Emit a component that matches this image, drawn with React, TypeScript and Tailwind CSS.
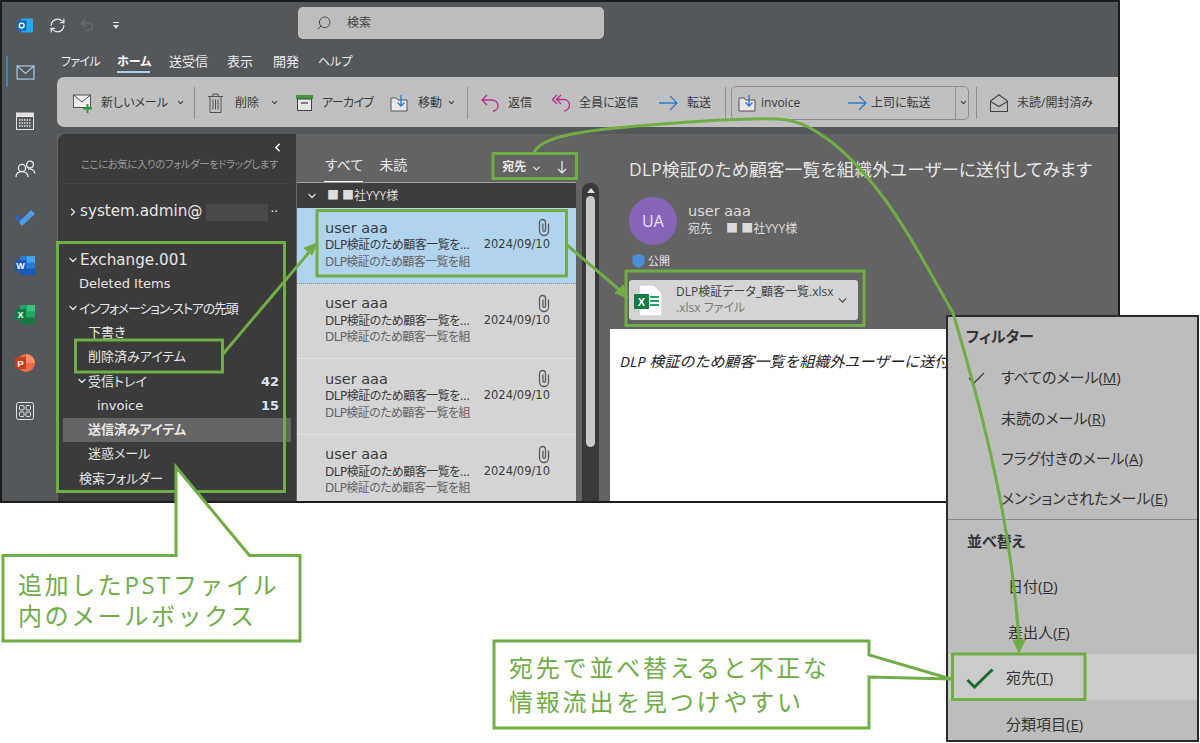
import { ChevronDown, ChevronLeft, ChevronRight, RefreshCw, Search, Undo2 } from "lucide-react";

const folders = [
  { label: "Deleted Items", cls: "pl-[16px]" },
  { label: "インフォメーション-ストアの先頭", cls: "pl-[16px] tracking-[-1.2px]", open: true },
  { label: "下書き", cls: "pl-[25px]" },
  { label: "削除済みアイテム", cls: "pl-[25px]" },
  { label: "受信トレイ", cls: "pl-[25px]", open: true, count: "42" },
  { label: "invoice", cls: "pl-[34px]", count: "15" },
  { label: "送信済みアイテム", cls: "pl-[25px] font-bold bg-[#646464]" },
  { label: "迷惑メール", cls: "pl-[25px]" },
  { label: "検索フォルダー", cls: "pl-[16px]" },
];

function Envelope({ className = "" }: { className?: string }) {
  return (
    <svg viewBox="0 0 20 16" className={className} fill="none" stroke="currentColor" strokeWidth="1.2">
      <rect x="1" y="1" width="18" height="14" />
      <path d="M1 1l9 8 9-8" />
    </svg>
  );
}

function Sep() {
  return <span className="block h-[32px] w-px bg-[#8f8f8f]" />;
}

function MoveIcon({ className = "" }: { className?: string }) {
  return (
    <svg viewBox="0 0 18 18" className={className} fill="none">
      <path d="M1 4h5l2 2h9v11H1z" fill="#e8e8e8" stroke="#555" />
      <path d="M11 1v11M7.5 8.5L11 12l3.5-3.5" stroke="#2b7cd3" strokeWidth="1.4" />
    </svg>
  );
}

function Arrow({ className = "" }: { className?: string }) {
  return (
    <svg viewBox="0 0 19 16" className={className} fill="none" stroke="#2b7cc0" strokeWidth="1.3">
      <path d="M0 8h18M11 1l7 7-7 7" />
    </svg>
  );
}

function Clip() {
  return (
    <svg viewBox="0 0 12 19" className="w-[12px] h-[19px] -mt-[2px]" fill="none" stroke="#5c5c5c" strokeWidth="1.3">
      <path d="M10.500 5.500V13a4.500 4.500 0 0 1-9 0V4.500a3 3 0 0 1 6 0V12a1.300 1.300 0 0 1-2.600 0V5.500" />
    </svg>
  );
}

function OfficeIcon({ letter, left, mid, light }: { letter: string; left: string; mid: string; light: string }) {
  return (
    <svg viewBox="0 0 20 19" className="w-[20px] h-[19px]">
      <rect x="5" y="0" width="15" height="19" rx="1" fill={mid} />
      <rect x="12" y="0" width="8" height="6.500" fill={light} />
      <rect x="5" y="12.500" width="15" height="6.500" fill={left} />
      <rect x="0" y="4" width="11" height="11" rx="1" fill={left} />
      <text x="5.500" y="12.700" fontSize="9" fontWeight="700" textAnchor="middle" fill="#fff" fontFamily="Liberation Sans">{letter}</text>
    </svg>
  );
}

function Rail() {
  return (
    <div className="w-[55px] shrink-0 relative">
      <span className="absolute left-[4px] top-[8px] h-[31px] w-[2px] bg-[#3a86d0]" />
      <div className="w-[46px] flex flex-col items-center">
        <div className="h-[48px] flex items-center justify-center">
          <Envelope className="w-[19px] h-[15px] text-[#a9d0ef]" />
        </div>
        <div className="h-[49px] flex items-center justify-center">
          <svg viewBox="0 0 18 18" className="w-[18px] h-[18px]" fill="none">
            <rect x="0.5" y="1" width="17" height="16.5" stroke="#e0e0e0" />
            <rect x="0.5" y="1" width="17" height="4" fill="#e0e0e0" />
            <path d="M3 8h12M3 11h12M3 14h12" stroke="#e0e0e0" strokeDasharray="1.5 1" strokeWidth="1.5" />
          </svg>
        </div>
        <div className="h-[48px] flex items-center justify-center">
          <svg viewBox="0 0 21 18" className="w-[21px] h-[18px]" fill="none" stroke="#e8e8e8" strokeWidth="1.3">
            <circle cx="7" cy="8" r="3.6" />
            <path d="M1 17c0-3.5 2.5-5.4 6-5.4s6 1.9 6 5.4" />
            <circle cx="15" cy="4.5" r="3.4" />
            <path d="M13 9c3.500-.6 6.500 1.200 6.800 4.500" />
          </svg>
        </div>
        <div className="h-[48px] flex items-center justify-center">
          <svg viewBox="0 0 20 17" className="w-[20px] h-[17px]">
            <path d="M0 9l3-3 4 4-3 3z" fill="#2564cf" />
            <path d="M4 13L16 1l4 4L7 17z" fill="#4f9be8" />
          </svg>
        </div>
        <div className="h-[49px] flex items-center justify-center">
          <OfficeIcon letter="W" left="#185abd" mid="#2b7cd3" light="#41a5ee" />
        </div>
        <div className="h-[48px] flex items-center justify-center">
          <OfficeIcon letter="X" left="#107c41" mid="#21a366" light="#33c481" />
        </div>
        <div className="h-[49px] flex items-center justify-center">
          <svg viewBox="0 0 20 18" className="w-[20px] h-[18px]">
            <circle cx="11" cy="9" r="9" fill="#ed6c47" />
            <path d="M11 0a9 9 0 0 1 9 9h-9z" fill="#ff8f6b" />
            <rect x="0" y="3" width="11" height="12" rx="1" fill="#c43e1c" />
            <text x="5.500" y="12.500" fontSize="9.500" fontWeight="700" textAnchor="middle" fill="#fff" fontFamily="Liberation Sans">P</text>
          </svg>
        </div>
        <div className="h-[47px] flex items-center justify-center">
          <svg viewBox="0 0 18 18" className="w-[18px] h-[18px]" fill="none" stroke="#e0e0e0">
            <rect x="0.5" y="0.5" width="17" height="17" rx="2" />
            <rect x="3.500" y="3.500" width="4.500" height="4.500" rx="1" />
            <rect x="10" y="3.500" width="4.500" height="4.500" rx="1" />
            <rect x="3.500" y="10" width="4.500" height="4.500" rx="1" />
            <rect x="10" y="10" width="4.500" height="4.500" rx="1" />
          </svg>
        </div>
      </div>
    </div>
  );
}

function Ribbon() {
  return (
    <div className="mt-px h-[50px] rounded-l-[7px] bg-[#c0c0c0] flex items-center pt-[1px] pl-[16px] text-[12px] text-[#3a3a3a] whitespace-nowrap shrink-0">
      <svg viewBox="0 0 20 20" className="w-[20px] h-[20px]" fill="none">
        <rect x="0.500" y="2" width="17" height="12.500" stroke="#555" fill="#eee" />
        <path d="M0.500 2l8.500 7 8.500-7" stroke="#555" />
        <path d="M14.500 11v9M10 15.500h9" stroke="#2e9a3c" strokeWidth="2" />
      </svg>
      <span className="ml-[8px] w-[65px]">新しいメール</span>
      <ChevronDown className="ml-[10px] w-[9px] h-[9px]" strokeWidth={3} />
      <span className="ml-[9px]"><Sep /></span>
      <svg viewBox="0 0 15 20" className="ml-[13px] w-[15px] h-[20px]" fill="none" stroke="#555">
        <path d="M0 3.500h15M5 3.500V1h5v2.500M2 3.500V19.500h11V3.500M5 6.500v10M7.500 6.500v10M10 6.500v10" />
      </svg>
      <span className="ml-[12px] w-[26px]">削除</span>
      <ChevronDown className="ml-[9px] w-[9px] h-[9px]" strokeWidth={3} />
      <svg viewBox="0 0 17 16" className="ml-[17px] w-[17px] h-[16px]" fill="none">
        <rect x="0" y="0" width="17" height="4" fill="#3f9b3f" />
        <rect x="1.500" y="4" width="14" height="11.500" stroke="#444" fill="#e6e6e6" />
        <path d="M5 8h7" stroke="#444" strokeWidth="1.300" />
      </svg>
      <span className="ml-[9px] w-[49px] tracking-[-0.6px]">アーカイブ</span>
      <MoveIcon className="ml-[19px] w-[18px] h-[18px]" />
      <span className="ml-[10px] w-[27px]">移動</span>
      <ChevronDown className="ml-[2px] w-[9px] h-[9px]" strokeWidth={3} />
      <span className="ml-[11px]"><Sep /></span>
      <svg viewBox="0 0 18 18" className="ml-[13px] w-[18px] h-[18px]" fill="none" stroke="#b5308a" strokeWidth="1.300">
        <path d="M6 1L1 6l5 5M1 6h10c3.500 0 6 2.500 6 5.500S15 17 12 17" />
      </svg>
      <span className="ml-[9px] w-[25px]">返信</span>
      <svg viewBox="0 0 18 18" className="ml-[19px] w-[18px] h-[18px]" fill="none" stroke="#b5308a" strokeWidth="1.300">
        <path d="M5 1L0.500 5.500 5 10M9 1L4.500 5.500 9 10M4.500 5.500h7.500c3 0 5.500 2.500 5.500 5.500S15 17 12 17" />
      </svg>
      <span className="ml-[9px] w-[62px]">全員に返信</span>
      <Arrow className="ml-[18px] w-[19px] h-[16px]" />
      <span className="ml-[9px] w-[26px]">転送</span>
      <span className="ml-[12px]"><Sep /></span>
      <div className="ml-[5px] w-[238px] h-[34px] rounded-[5px] border border-[#8f8f8f] flex items-center pl-[6px]">
        <MoveIcon className="w-[18px] h-[18px]" />
        <span className="ml-[5px] w-[87px]">invoice</span>
        <Arrow className="w-[19px] h-[16px]" />
        <span className="ml-[4px] w-[58px]">上司に転送</span>
        <span className="ml-[26px] h-full w-px bg-[#8f8f8f]" />
        <ChevronDown className="ml-[3px] w-[9px] h-[9px]" strokeWidth={3} />
      </div>
      <span className="ml-[7px]"><Sep /></span>
      <svg viewBox="0 0 18 18" className="ml-[13px] w-[18px] h-[18px]" fill="none" stroke="#444" strokeWidth="1.100">
        <path d="M0.500 7L9 0.800 17.500 7v10.500H0.500zM0.500 7.500L9 12.500l8.500-5" />
      </svg>
      <span className="ml-[9px]">未読/開封済み</span>
    </div>
  );
}

function FolderPane() {
  return (
    <div className="w-[238px] ml-px shrink-0 bg-[#3b3b3b] rounded-tl-[7px] text-[#e6e6e6] flex flex-col font-['DejaVu_Sans','Noto_Sans_CJK_JP',sans-serif]">
      <div className="h-[50px] mx-[5px] border-b border-[#444] relative">
        <ChevronLeft className="absolute right-[7px] top-[7px] w-[13px] h-[13px] text-white" strokeWidth={3} />
        <p className="absolute left-[18px] top-[23px] text-[10.500px] tracking-[-0.5px] text-[#9a9a9a] whitespace-nowrap">ここにお気に入りのフォルダーをドラッグします</p>
      </div>
      <div className="h-[56px] flex items-center pl-[9px] text-[15.200px]">
        <ChevronRight className="w-[12px] h-[14px]" strokeWidth={2.500} />
        <span className="ml-px leading-none">system.admin@</span>
        <span className="ml-[3px] w-[62px] h-[17px] bg-[#484848]" />
        <span className="ml-[3px] text-[12px] leading-none">··</span>
      </div>
      <div className="h-[24px] flex items-center pl-[9px] text-[15.200px] mt-[8px]">
        <ChevronDown className="w-[12px] h-[12px]" strokeWidth={2.500} />
        <span className="ml-px">Exchange.001</span>
      </div>
      <div className="flex flex-col text-[13px] mx-[5px]">
        {folders.map((f) => (
          <div key={f.label} className={`h-[24.300px] flex items-center pr-[12px] whitespace-nowrap ${f.cls}`}>
            {f.open && <ChevronDown className="-ml-[12px] w-[12px] h-[12px]" strokeWidth={2.500} />}
            <span>{f.label}</span>
            {f.count && <span className="ml-auto font-bold text-[#d5e5f3]">{f.count}</span>}
          </div>
        ))}
      </div>
    </div>
  );
}

function MessageItem({ selected = false }: { selected?: boolean }) {
  return (
    <div className={`h-[75.500px] shrink-0 pl-[28px] pr-[26px] pt-[12px] border-b font-['DejaVu_Sans','Noto_Sans_CJK_JP',sans-serif] ${selected ? "bg-[#b0d3ee] border-dotted border-[#8a8a8a]" : "bg-[#d4d4d4] border-[#e2e2e2]"}`}>
      <div className="flex items-center justify-between h-[17px] text-[14.500px] text-[#3c3c3c]">
        <span>user aaa</span>
        <Clip />
      </div>
      <div className="flex justify-between h-[16px] items-center text-[12px] text-[#3c3c3c]">
        <span className="whitespace-nowrap tracking-[-0.5px]">DLP検証のため顧客一覧を...</span>
        <span className="text-[11.500px]">2024/09/10</span>
      </div>
      <div className="h-[17px] flex items-center text-[12px] tracking-[-0.6px] text-[#666]">DLP検証のため顧客一覧を組</div>
    </div>
  );
}

function MessageList() {
  return (
    <>
      <div className="w-[279px] ml-px shrink-0 flex flex-col overflow-hidden">
        <div className="h-[49px] shrink-0 flex items-end text-[#e8e8e8] border-b border-[#a0a0a0] relative whitespace-nowrap">
          <span className="ml-[28px] mb-[7px] text-[14px]">すべて</span>
          <span className="ml-[16px] mb-[7px] text-[14px]">未読</span>
          <span className="absolute left-[27px] bottom-0 h-px w-[39px] bg-white" />
          <span className="ml-[95px] mb-[6px] text-[12px] font-bold">宛先</span>
          <ChevronDown className="ml-[5px] mb-[8px] w-[11px] h-[11px]" strokeWidth={2.500} />
          <svg viewBox="0 0 10 13" className="ml-[15px] mb-[8px] w-[10px] h-[13px]" fill="none" stroke="#eee" strokeWidth="1.200">
            <path d="M5 0v12M1 8l4 4 4-4" />
          </svg>
        </div>
        <div className="h-[25px] shrink-0 flex items-center bg-[#3d3d3d] text-[12px] text-[#dcdcdc]">
          <ChevronDown className="ml-[9px] w-[12px] h-[12px]" strokeWidth={2.500} />
          <span className="ml-[9px]">■ ■社YYY様</span>
        </div>
        <MessageItem selected />
        <MessageItem />
        <MessageItem />
        <MessageItem />
      </div>
      <div className="w-[24px] shrink-0 pl-[6px] pt-[49px]">
        <div className="h-full w-[17px] rounded-t-[8px] bg-[#3a3a3a] flex flex-col items-center pt-[5px]">
          <span className="h-0 w-0 border-x-[4px] border-b-[5px] border-x-transparent border-b-[#e0e0e0]" />
          <span className="mt-[3px] h-[251px] w-[9px] rounded-full bg-[#c8c8c8]" />
        </div>
      </div>
    </>
  );
}

function ExcelDoc() {
  return (
    <svg viewBox="0 0 28 31" className="w-[28px] h-[31px]">
      <path d="M5 0h15l8 8v23H5z" fill="#fff" stroke="#c0c0c0" />
      <path d="M16 12h9M16 16h9M16 20h9" stroke="#21a366" strokeWidth="2" />
      <rect x="0" y="9" width="15" height="15" rx="1" fill="#107c41" />
      <text x="7.500" y="20.500" fontSize="11" fontWeight="700" textAnchor="middle" fill="#fff" fontFamily="Liberation Sans">X</text>
    </svg>
  );
}

function ReadingPane() {
  return (
    <div className="flex-1 flex flex-col min-w-0">
      <div className="h-[195px] shrink-0 pl-[29px] pt-[22px] text-[#e6e6e6]">
        <h1 className="h-[26px] text-[17.500px] tracking-[0.25px] font-normal leading-[26px] whitespace-nowrap">DLP検証のため顧客一覧を組織外ユーザーに送付してみます</h1>
        <div className="mt-[15px] flex h-[48px]">
          <div className="w-[48px] h-[48px] rounded-full bg-[#8764b8] flex items-center justify-center text-[16px] text-[#e8e0f4]">UA</div>
          <div className="ml-[11px] pt-[5px]">
            <p className="text-[14.500px] leading-[18px] text-[#dcdcdc] font-['DejaVu_Sans',sans-serif]">user aaa</p>
            <p className="text-[12px] leading-[18px] text-[#dcdcdc]">宛先<span className="ml-[14px]">■ ■社YYY様</span></p>
          </div>
        </div>
        <div className="mt-[8px] h-[16px] flex items-center text-[11px] pl-[3px]">
          <svg viewBox="0 0 14 15" className="w-[13px] h-[14px]">
            <path d="M7 0l6.500 2v6c0 3.500-3 5.800-6.500 7C3.500 13.800.5 11.500.5 8V2z" fill="#4a90d9" />
          </svg>
          <span className="ml-[3px]">公開</span>
        </div>
        <div className="mt-[11px] w-[229px] h-[40px] rounded-[3px] bg-[#d4d4d4] flex items-center pl-[5px] text-[#444]">
          <ExcelDoc />
          <div className="ml-[14px] w-[158px]">
            <p className="text-[12px] leading-[16px] whitespace-nowrap">DLP検証データ_顧客一覧.xlsx</p>
            <p className="text-[12px] leading-[16px] text-[#7a7a7a]">.xlsx ファイル</p>
          </div>
          <ChevronDown className="ml-[2px] w-[13px] h-[13px]" strokeWidth={2} />
        </div>
      </div>
      <div className="flex-1 ml-[10px] bg-white pl-[10px] pt-[21px] text-[15px] italic text-[#222] whitespace-nowrap overflow-hidden [font-feature-settings:normal]">
        DLP 検証のため顧客一覧を組織外ユーザーに送付してみます
      </div>
    </div>
  );
}

function SortMenu() {
  const row = "flex items-center text-[15px] text-[#333] whitespace-nowrap";
  return (
    <div className="absolute left-[946px] top-[315px] w-[253px] h-[427px] border-2 border-[#2a2a2a] bg-[#bdbdbd] flex flex-col">
      <div className={`${row} h-[38px] pl-[18px] font-bold text-[14px]`}>フィルター</div>
      <div className={`${row} h-[44px] pl-[53px] relative`}>
        <svg viewBox="0 0 17 12" className="absolute left-[20px] top-[17px] w-[17px] h-[12px]" fill="none" stroke="#444" strokeWidth="1.500">
          <path d="M1 6l5 5L16 1" />
        </svg>
        すべてのメール(<u>M</u>)
      </div>
      <div className={`${row} h-[38px] pl-[53px]`}>未読のメール(<u>R</u>)</div>
      <div className={`${row} h-[42px] pl-[53px]`}>フラグ付きのメール(<u>A</u>)</div>
      <div className={`${row} h-[38px] pl-[53px]`}>メンションされたメール(<u>E</u>)</div>
      <div className="h-px bg-[#8c8c8c] mt-[2px]" />
      <div className={`${row} h-[42px] pl-[19px] font-bold text-[14px]`}>並べ替え</div>
      <div className={`${row} h-[48px] pl-[60px]`}>日付(<u>D</u>)</div>
      <div className={`${row} h-[44px] pl-[60px]`}>差出人(<u>F</u>)</div>
      <div className={`${row} h-[46px] pl-[58px] bg-[#cbcbcb] relative`}>
        <svg viewBox="0 0 28 21" className="absolute left-[18px] top-[14px] w-[28px] h-[21px]" fill="none" stroke="#1d6b2a" strokeWidth="3">
          <path d="M1.500 12l7 7L26.500 1.500" />
        </svg>
        宛先(<u>T</u>)
      </div>
      <div className={`${row} h-[40px] pl-[58px] pt-[8px]`}>分類項目(<u>E</u>)</div>
    </div>
  );
}

// 注釈の枠・矢印・吹き出し
function Annotations() {
  const g = "#70ad47";
  return (
    <svg viewBox="0 0 1200 743" className="absolute inset-0 w-[1200px] h-[743px] pointer-events-none" fill="none" stroke={g} strokeWidth="3">
      <rect x="57.500" y="242.500" width="227" height="249" />
      <rect x="75.500" y="340" width="147" height="32" />
      <rect x="317" y="210.500" width="249.500" height="65.500" />
      <rect x="626" y="271" width="238" height="54.500" />
      <rect x="493" y="153.500" width="83.500" height="25" />
      <rect x="952.500" y="654" width="132.500" height="45.500" />
      <path d="M223 354L311 250" />
      <path d="M317 243l-13 5 8 7z" fill={g} strokeWidth="1" />
      <path d="M567 245L622 292" />
      <path d="M628 298l-5-13-8 8z" fill={g} strokeWidth="1" />
      <path d="M534 153C540 136 585 130 650 125C700 121 750 118 778 119C800 120 816 130 834 144C890 190 925 265 953 313C985 420 1012 530 1019 642" />
      <path d="M1019 653l-6-13h12z" fill={g} strokeWidth="1" />
      <path d="M176 555.500V467L249.500 555.500H300V641H3V555.500z" fill="#fff" />
      <path d="M494 641H869V655L951 679L869 677V728H494z" fill="#fff" />
    </svg>
  );
}

export default function App() {
  return (
    <div className="relative w-[1200px] h-[743px] overflow-hidden bg-white font-['Open_Sans','Noto_Sans_CJK_JP',sans-serif] [font-feature-settings:'palt']">
      <div className="w-[1120px] h-[503px] border-2 border-[#1c1c1c] bg-[#55585b] flex flex-col overflow-hidden">
        <div className="h-[46px] shrink-0 flex items-center relative">
          <svg viewBox="0 0 17 15" className="ml-[15px] w-[16px] h-[15px]">
            <rect x="4" y="0" width="13" height="15" rx="1" fill="#28a8ea" />
            <rect x="0" y="2" width="10" height="11" rx="1" fill="#0f6cbd" />
            <circle cx="5" cy="7.500" r="2.600" fill="none" stroke="#fff" strokeWidth="1.400" />
          </svg>
          <RefreshCw className="ml-[16px] w-[17px] h-[17px] text-[#ececec]" strokeWidth={1.600} />
          <Undo2 className="ml-[13px] w-[16px] h-[16px] text-[#6c6f72]" strokeWidth={1.600} />
          <span className="ml-[18px] flex flex-col items-center gap-[2px]">
            <span className="h-px w-[6px] bg-[#e0e0e0]" />
            <span className="h-0 w-0 border-x-[3px] border-t-[4px] border-x-transparent border-t-[#e0e0e0]" />
          </span>
          <div className="absolute left-[296px] top-[5px] w-[306px] h-[32px] rounded-[5px] bg-[#bdbdbd] flex items-center pl-[18px] text-[12px] text-[#444]">
            <Search className="w-[16px] h-[16px] -scale-x-100" strokeWidth={1.400} />
            <span className="ml-[15px]">検索</span>
          </div>
        </div>
        <div className="flex flex-1 min-h-0">
          <Rail />
          <div className="flex-1 min-w-0 flex flex-col">
            <div className="h-[28px] shrink-0 flex items-center pl-[4px] text-[12px] text-[#ececec] whitespace-nowrap">
              <span className="w-[38px] tracking-[-0.7px]">ファイル</span>
              <span className="ml-[18px] w-[33px] relative font-bold text-white">
                ホーム
                <span className="absolute left-0 right-0 -bottom-[2px] h-[2px] bg-[#a9d0ef]" />
              </span>
              <span className="ml-[19px] w-[39px] text-[13px]">送受信</span>
              <span className="ml-[19px] w-[27px] text-[13px]">表示</span>
              <span className="ml-[19px] w-[26px] text-[13px]">開発</span>
              <span className="ml-[19px] w-[33px]">ヘルプ</span>
            </div>
            <Ribbon />
            <div className="flex flex-1 min-h-0 mt-[7px] bg-[#636363]">
              <FolderPane />
              <MessageList />
              <ReadingPane />
            </div>
          </div>
        </div>
      </div>
      <SortMenu />
      <Annotations />
      <p className="absolute left-[18px] top-[569px] text-[24px] leading-[31px] tracking-[2.600px] text-[#70ad47] [font-feature-settings:normal]">
        追加したPSTファイル<br />内のメールボックス
      </p>
      <p className="absolute left-[509px] top-[651px] text-[24px] leading-[34px] tracking-[2.800px] text-[#70ad47] [font-feature-settings:normal]">
        宛先で並べ替えると不正な<br />情報流出を見つけやすい
      </p>
    </div>
  );
}
